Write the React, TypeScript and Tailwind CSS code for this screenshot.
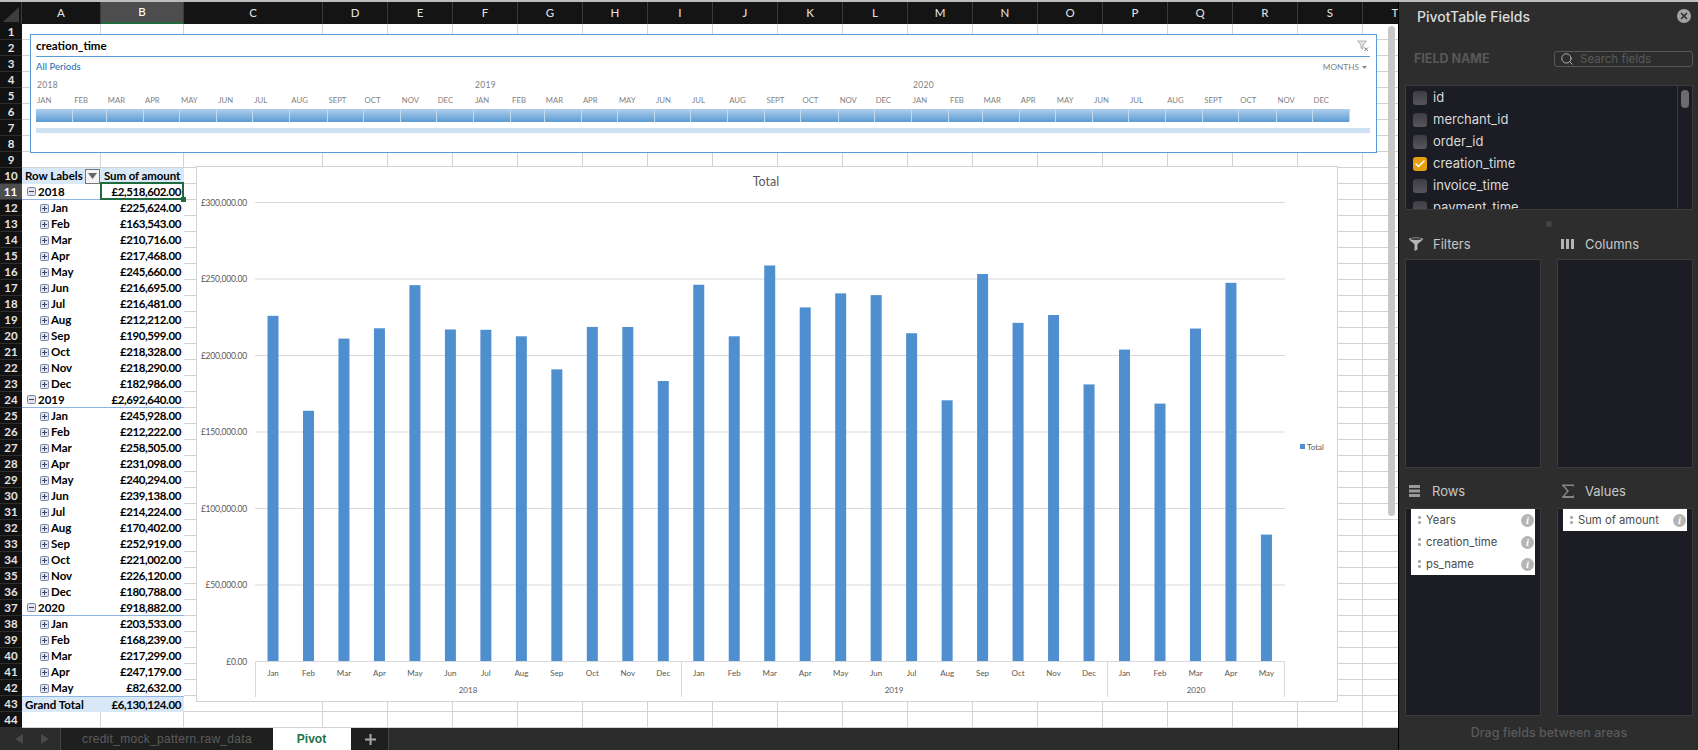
import { Check, Search } from 'lucide-react';

const colLetters = 'ABCDEFGHIJKLMNOPQRST'.split('');
const colWidths = ['w-[79px]', 'w-[83px]', 'w-[139px]'];
const rowNumbers = Array.from({ length: 44 }, (_, i) => i + 1);

type PivotRow = { label: string; value: string; year?: boolean };

const monthNames = ['Jan', 'Feb', 'Mar', 'Apr', 'May', 'Jun', 'Jul', 'Aug', 'Sep', 'Oct', 'Nov', 'Dec'];

const amounts: number[][] = [
  [225624, 163543, 210716, 217468, 245660, 216695, 216481, 212212, 190599, 218328, 218290, 182986],
  [245928, 212222, 258505, 231098, 240294, 239138, 214224, 170402, 252919, 221002, 226120, 180788],
  [203533, 168239, 217299, 247179, 82632],
];
const yearNames = ['2018', '2019', '2020'];
const yearTotals = ['£2,518,602.00', '£2,692,640.00', '£918,882.00'];

const money = (n: number) => '£' + n.toLocaleString('en-GB') + '.00';

const pivotRows: PivotRow[] = amounts.flatMap((list, y) => [
  { label: yearNames[y], value: yearTotals[y], year: true },
  ...list.map((v, m) => ({ label: monthNames[m], value: money(v) })),
]);

const bars = amounts.flatMap((list, y) => list.map((v, m) => ({ v, name: monthNames[m], y })));

const ExpandBox = ({ minus }: { minus?: boolean }) => (
  <svg width="9" height="9" viewBox="0 0 9 9" className="shrink-0">
    <rect x="0.5" y="0.5" width="8" height="8" rx="1" fill="#dfe3ee" stroke="#7b84a6" />
    <path d={minus ? 'M2 4.5h5' : 'M2 4.5h5M4.5 2v5'} stroke="#3d4663" />
  </svg>
);

function PivotCells({ row }: { row: number }) {
  const base = 'h-4 flex items-center font-bold text-[11.5px] text-black shrink-0 box-border ';
  if (row === 10) {
    return (
      <>
        <div className={base + colWidths[0] + ' bg-[#d9e8f7] pl-[3px] pr-[1px]'}>
          Row Labels
          <span className="ml-auto w-[15px] h-[15px] bg-[#f3f3f3] border border-[#777] flex items-center justify-center">
            <svg width="9" height="6" viewBox="0 0 9 6"><path d="M0 0h9L4.5 6z" fill="#666" /></svg>
          </span>
        </div>
        <div className={base + colWidths[1] + ' bg-[#d9e8f7] pl-[3px] tracking-[-0.1px]'}>Sum of amount</div>
      </>
    );
  }
  if (row === 43) {
    return (
      <>
        <div className={base + colWidths[0] + ' bg-[#d9e8f7] border-t border-[#8db4e2] pl-[3px]'}>Grand Total</div>
        <div className={base + colWidths[1] + ' bg-[#d9e8f7] border-t border-[#8db4e2] justify-end pr-[3px] tracking-[-0.4px]'}>£6,130,124.00</div>
      </>
    );
  }
  const r = pivotRows[row - 11];
  const edge = r.year ? ' border-b border-[#8db4e2]' : '';
  return (
    <>
      <div className={base + colWidths[0] + edge + (r.year ? ' pl-[5px] gap-[2px]' : ' pl-[18px] gap-[2px]')}>
        <ExpandBox minus={r.year} />
        {r.label}
      </div>
      <div className={base + colWidths[1] + edge + ' justify-end pr-[3px] tracking-[-0.4px]'}>{r.value}</div>
    </>
  );
}

function SheetRow({ row }: { row: number }) {
  const active = row === 11;
  const pivot = row >= 10 && row <= 43;
  return (
    <div className="flex h-4">
      <div
        className={
          'w-[22px] h-4 shrink-0 box-border flex items-center justify-center text-[11.5px] font-bold border-b border-[#2e2e2e] ' +
          (active ? 'bg-[#4d4d4d] text-white border-r border-r-[#1f6b3f]' : 'bg-[#121212] text-[#e4e4e4]')
        }
      >
        {row}
      </div>
      {pivot && <PivotCells row={row} />}
      {colLetters.slice(pivot ? 2 : 0).map((c) => (
        <div
          key={c}
          className={(colWidths[colLetters.indexOf(c)] ?? 'w-[65px]') + ' h-4 shrink-0 box-border border-r border-b border-[#d2d2d2]'}
        />
      ))}
    </div>
  );
}

const timelineMonths = ['JAN', 'FEB', 'MAR', 'APR', 'MAY', 'JUN', 'JUL', 'AUG', 'SEPT', 'OCT', 'NOV', 'DEC'];
const monthDays = [31, 28, 31, 30, 31, 30, 31, 31, 30, 31, 30, 31];
const timelineStrip = [0, 1, 2].flatMap((y) => timelineMonths.map((m, i) => ({ key: `${y}-${m}`, m, w: monthDays[i] * 1.2 })));

function Timeline() {
  return (
    <div className="absolute left-[30px] top-[32px] w-[1347px] h-[119px] bg-white border border-[#5b9bd5] box-border pl-[5px] pr-[6px] text-[#7f7f7f]">
      <div className="h-[22px] border-b border-[#5b9bd5] flex items-center justify-between text-[11.5px] font-bold text-black">
        creation_time
        <svg width="12" height="12" viewBox="0 0 12 12" className="mr-[1px]">
          <path d="M0.5 1h9L6 5v4L4 8V5z" fill="#e4e4e4" stroke="#a0a0a0" strokeWidth="0.8" />
          <path d="M7.5 7.5l3.5 3.5M11 7.5L7.5 11" stroke="#777" strokeWidth="1" />
        </svg>
      </div>
      <div className="flex justify-between items-center h-[20px] text-[9.5px]">
        <span className="text-[#2e75b6] font-medium">All Periods</span>
        <span className="text-[8.25px] flex items-center gap-[3px] mr-[3px]">
          MONTHS
          <svg width="5" height="3" viewBox="0 0 5 3"><path d="M0 0h5L2.5 3z" fill="#888" /></svg>
        </span>
      </div>
      <div className="flex h-[16px] items-center text-[8.5px] tracking-[0.3px]">
        {yearNames.map((y) => (
          <span key={y} className="w-[438px] pl-[1px]">{y}</span>
        ))}
      </div>
      <div className="flex h-[16px] items-center text-[7.75px]">
        {timelineStrip.map((t) => (
          <span key={t.key} className="shrink-0 pl-[1px]" style={{ width: t.w }}>{t.m}</span>
        ))}
      </div>
      <div className="flex h-[13px]">
        {timelineStrip.map((t) => (
          <span key={t.key} className="shrink-0 box-border border-r border-[#c3d9ef] bg-gradient-to-b from-[#b0cfec] to-[#5b9bd5]" style={{ width: t.w }} />
        ))}
      </div>
      <div className="h-[5px] mt-[6px] bg-[#cfe2f3]" />
    </div>
  );
}

const px = (i: number) => 273 + i * 35.48;
const yOf = (v: number) => 661 - (v / 300000) * 459;

function Chart() {
  return (
    <div className="absolute left-[196px] top-[164px] w-[1142px] h-[536px] bg-white border border-[#d2d2d2] box-border">
      <svg width="1140" height="534" viewBox="197 167 1140 534" fontFamily="Lato, sans-serif" fill="#595959">
        <text x="766" y="186" fontSize="12.5" textAnchor="middle">Total</text>
        {[0, 1, 2, 3, 4, 5, 6].map((i) => (
          <g key={i}>
            {i > 0 && <line x1="255" x2="1285" y1={661.5 - i * 76.5} y2={661.5 - i * 76.5} stroke="#d9d9d9" />}
            <text x="247" y={664.5 - i * 76.5} fontSize="8.5" letterSpacing="-0.2" textAnchor="end">
              {i === 0 ? '£0.00' : '£' + (i * 50000).toLocaleString('en-GB') + '.00'}
            </text>
          </g>
        ))}
        {bars.map((b, i) => (
          <g key={i}>
            <rect x={px(i) - 5.5} y={yOf(b.v)} width="11" height={661 - yOf(b.v)} fill="#4f8fd0" />
            <text x={px(i)} y="676" fontSize="8" textAnchor="middle">{b.name}</text>
          </g>
        ))}
        <line x1="255" x2="1285" y1="661.5" y2="661.5" stroke="#d9d9d9" />
        {[255.5, 681.5, 1107.5, 1284.5].map((x) => (
          <line key={x} x1={x} x2={x} y1="661" y2="697" stroke="#d9d9d9" />
        ))}
        <text x="468" y="693" fontSize="8" textAnchor="middle">2018</text>
        <text x="894" y="693" fontSize="8" textAnchor="middle">2019</text>
        <text x="1196" y="693" fontSize="8" textAnchor="middle">2020</text>
        <rect x="1300" y="444" width="5" height="5" fill="#4f8fd0" />
        <text x="1307" y="449.5" fontSize="8">Total</text>
      </svg>
    </div>
  );
}

const InfoDot = () => (
  <span className="w-[13px] h-[13px] rounded-full bg-[#b5b5b5] text-white text-[11px] font-bold italic flex items-center justify-center font-['Liberation_Serif',serif] shrink-0">
    i
  </span>
);

const Grip = () => (
  <svg width="3" height="8" viewBox="0 0 3 8" className="shrink-0">
    <rect width="3" height="3" rx="1" fill="#aaa" />
    <rect y="5" width="3" height="3" rx="1" fill="#aaa" />
  </svg>
);

const AreaItem = ({ name }: { name: string }) => (
  <div className="h-[22px] flex items-center gap-[5px] pl-[7px] pr-[1px] text-[11.25px] text-[#4a4a4a]">
    <Grip />
    <span className="pt-px">{name}</span>
    <span className="ml-auto"><InfoDot /></span>
  </div>
);

const AreaHead = ({ icon, label, gap }: { icon: React.ReactNode; label: string; gap: string }) => (
  <div className={'flex items-center h-[14px] pl-[4px] text-[13px] text-[#c8c8c8] ' + gap}>
    {icon}
    <span className="pt-[2px]">{label}</span>
  </div>
);

const fields = ['id', 'merchant_id', 'order_id', 'creation_time', 'invoice_time', 'payment_time'];

function FieldPanel() {
  return (
    <div className="w-[299px] shrink-0 h-full bg-[#2d2d2d] flex flex-col pl-[6px] pr-[5px] font-['Inter',sans-serif]">
      <div className="h-[28px] flex items-center justify-between pl-[12px] shrink-0">
        <span className="text-[14px] font-medium text-[#dcdcdc]">PivotTable Fields</span>
        <span className="w-[14px] h-[14px] rounded-full bg-[#a3a3a3] flex items-center justify-center mr-[2px]">
          <svg width="8" height="8" viewBox="0 0 8 8"><path d="M1 1l6 6M7 1L1 7" stroke="#2d2d2d" strokeWidth="1.6" /></svg>
        </span>
      </div>
      <div className="flex items-center justify-between mt-[21px] h-4 shrink-0">
        <span className="pl-[9px] text-[12.5px] font-bold text-[#585858]">FIELD NAME</span>
        <div className="w-[139px] h-4 border border-[#585858] rounded-[3px] flex items-center pl-[5px] gap-[6px] text-[11.5px] text-[#5a5a5a]">
          <Search size={14} color="#b8b8b8" strokeWidth={1.6} />
          <span className="pt-[2px]">Search fields</span>
        </div>
      </div>
      <div className="mt-[18px] h-[125px] shrink-0 bg-[#1c1c24] border border-[#3b3b3b] flex overflow-hidden">
        <div className="flex-1 pt-[1px]">
          {fields.map((f) => {
            const on = f === 'creation_time';
            return (
              <div key={f} className="h-[22px] flex items-center gap-[6px] pl-[7px] text-[13px] text-[#dadada]">
                <span
                  className={
                    'w-[14px] h-[14px] rounded-[3px] flex items-center justify-center shrink-0 ' +
                    (on ? 'bg-[#e5a00d]' : 'bg-gradient-to-b from-[#3c3c41] to-[#56565b]')
                  }
                >
                  {on && <Check size={12} color="#fff" strokeWidth={3} />}
                </span>
                {f}
              </div>
            );
          })}
        </div>
        <div className="w-[15px] border-l border-[#3b3b3b] pt-[4px] pl-[3px] shrink-0">
          <div className="w-[8px] h-[18px] rounded-full bg-[#6c6c6c]" />
        </div>
      </div>
      <div className="h-[27px] flex items-center justify-center shrink-0">
        <span className="w-[6px] h-[6px] rounded-full bg-[#444]" />
      </div>
      <div className="grid grid-cols-[136px_136px] gap-x-4 shrink-0">
        <AreaHead
          label="Filters"
          gap="gap-[10px]"
          icon={
            <svg width="14" height="14" viewBox="0 0 14 14">
              <path d="M0 2C0 0 14 0 14 2 14 3.5 9 6 8.5 7.5V12.5L5.5 14V7.5C5 6 0 3.5 0 2z" fill="#b5b5b5" />
              <ellipse cx="7" cy="2" rx="5.5" ry="0.9" fill="#3a3a3a" />
            </svg>
          }
        />
        <AreaHead
          label="Columns"
          gap="gap-[11px]"
          icon={
            <svg width="13" height="10" viewBox="0 0 13 10">
              <path d="M0 0h3v10H0zM5 0h3v10H5zM10 0h3v10h-3z" fill="#b5b5b5" />
            </svg>
          }
        />
        <div className="h-[209px] mt-2 bg-[#1c1c24] border border-[#3b3b3b]" />
        <div className="h-[209px] mt-2 bg-[#1c1c24] border border-[#3b3b3b]" />
        <div className="mt-4">
          <AreaHead
            label="Rows"
            gap="gap-[12px]"
            icon={
              <svg width="11" height="12" viewBox="0 0 11 12">
                <path d="M0 0h11v3H0zM0 4.5h11v3H0zM0 9h11v3H0z" fill="#9a9a9a" />
              </svg>
            }
          />
        </div>
        <div className="mt-4">
          <AreaHead
            label="Values"
            gap="gap-[10px]"
            icon={
              <svg width="14" height="14" viewBox="0 0 14 14">
                <path d="M1 .5h12V3L12 2H3.5L8 7l-4.5 5H12l1-1.5V14H1v-1l5-6-5-5.5z" fill="#858585" />
              </svg>
            }
          />
        </div>
        <div className="h-[208px] mt-[10px] bg-[#1c1c24] border border-[#3b3b3b] px-[5px]">
          <div className="bg-white">
            <AreaItem name="Years" />
            <AreaItem name="creation_time" />
            <AreaItem name="ps_name" />
          </div>
        </div>
        <div className="h-[208px] mt-[10px] bg-[#1c1c24] border border-[#3b3b3b] px-[5px]">
          <div className="bg-white">
            <AreaItem name="Sum of amount" />
          </div>
        </div>
      </div>
      <div className="flex-1 flex items-center justify-center text-[12.5px] font-medium text-[#5a5a5a]">
        Drag fields between areas
      </div>
    </div>
  );
}

function TabBar() {
  return (
    <div className="h-[22px] bg-[#2b2b2b] flex font-['Liberation_Sans',sans-serif] text-[12px] shrink-0">
      <div className="w-[61px] flex items-center pl-[15px] gap-[18px] border-r border-[#444] box-border">
        <svg width="8" height="10" viewBox="0 0 8 10"><path d="M8 0v10L0 5z" fill="#4a4a4a" /></svg>
        <svg width="8" height="10" viewBox="0 0 8 10"><path d="M0 0v10l8-5z" fill="#4a4a4a" /></svg>
      </div>
      <div className="w-[212px] bg-[#1f1f1f] text-[#5c5c5c] tracking-[0.3px] flex items-center justify-center">credit_mock_pattern.raw_data</div>
      <div className="w-[78px] bg-white text-[#217346] font-bold flex items-center justify-center pr-px">Pivot</div>
      <div className="w-[38px] bg-[#1f1f1f] flex items-center justify-center border-r border-[#444] box-border pl-[2px]">
        <svg width="11" height="11" viewBox="0 0 11 11"><path d="M4.5 0h2v4.5H11v2H6.5V11h-2V6.5H0v-2h4.5z" fill="#a8a8a8" /></svg>
      </div>
    </div>
  );
}

export default function App() {
  return (
    <div className="w-[1698px] h-[750px] overflow-hidden flex flex-col bg-white font-['Lato',sans-serif]">
      <div className="h-[2px] bg-[#bdbdbd] shrink-0" />
      <div className="flex flex-1 min-h-0">
        <div className="w-[1399px] shrink-0 flex flex-col border-r border-black box-border">
          <div className="relative overflow-hidden h-[726px] shrink-0">
            <div className="flex h-[22px] bg-[#141414]">
              <div className="w-[22px] shrink-0 flex items-end justify-end pr-[2px] pb-[2px] border-r border-[#3a3a3a] box-border">
                <svg width="16" height="15" viewBox="0 0 16 15"><path d="M16 0v15H0z" fill="#3d3d3d" /></svg>
              </div>
              {colLetters.map((c, i) => (
                <div
                  key={c}
                  className={
                    (colWidths[i] ?? 'w-[65px]') +
                    ' shrink-0 box-border flex items-center justify-center text-[11.5px] font-medium border-r border-[#3a3a3a] ' +
                    (c === 'B' ? 'bg-[#4d4d4d] text-white border-b-2 border-b-[#1f6b3f]' : 'text-[#dedede]')
                  }
                >
                  {c}
                </div>
              ))}
            </div>
            {rowNumbers.map((r) => (
              <SheetRow key={r} row={r} />
            ))}
            <Timeline />
            <Chart />
            <div className="absolute left-[100px] top-[180px] w-[84px] h-[18px] border-2 border-[#1f6b3f] box-border" />
            <div className="absolute left-[181px] top-[195px] w-[5px] h-[5px] bg-[#1f6b3f]" />
            <div className="absolute left-[1388px] top-[24px] w-[7px] h-[490px] rounded-full bg-[#c8c8c8]" />
          </div>
          <TabBar />
        </div>
        <FieldPanel />
      </div>
    </div>
  );
}
